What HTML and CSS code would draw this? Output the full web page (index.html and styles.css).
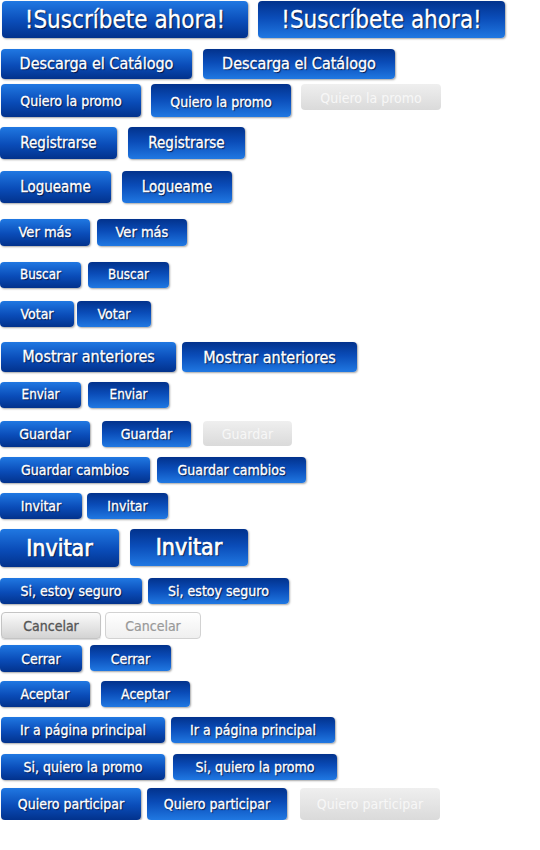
FILE: index.html
```html
<!DOCTYPE html>
<html lang="es">
<head>
<meta charset="UTF-8" />
<meta name="viewport" content="width=device-width, initial-scale=1" />
<title>Botones</title>
<link rel="stylesheet" href="styles.css">
</head>
<body>
  <div class="board">
    <div class="row r1 g10 pl2">
      <button class="btn up s-xl w246">!Suscríbete ahora!</button>
      <button class="btn down s-xl w247">!Suscríbete ahora!</button>
    </div>
    <div class="row r2 g11 pl1">
      <button class="btn up s-l w191">Descarga el Catálogo</button>
      <button class="btn down s-l w192">Descarga el Catálogo</button>
    </div>
    <div class="row r3 g10 pl1">
      <button class="btn up s-m h33 w140">Quiero la promo</button>
      <button class="btn down s-m h33 w140 lower">Quiero la promo</button>
      <button class="btn off s-m w140 lower">Quiero la promo</button>
    </div>
    <div class="row r4 g11">
      <button class="btn up s-ml h32 w117">Registrarse</button>
      <button class="btn down s-ml h32 w117">Registrarse</button>
    </div>
    <div class="row r5 g11">
      <button class="btn up s-ml h32 w111">Logueame</button>
      <button class="btn down s-ml h32 w110">Logueame</button>
    </div>
    <div class="row r6 g7">
      <button class="btn up s-sm h27 w90">Ver más</button>
      <button class="btn down s-sm h27 w90">Ver más</button>
    </div>
    <div class="row r7 g7">
      <button class="btn up s-xs w81">Buscar</button>
      <button class="btn down s-xs w81">Buscar</button>
    </div>
    <div class="row r8 g3">
      <button class="btn up s-s w74">Votar</button>
      <button class="btn down s-s w74">Votar</button>
    </div>
    <div class="row r9 g6 pl1">
      <button class="btn up s-l w175">Mostrar anteriores</button>
      <button class="btn down s-l w175 lower">Mostrar anteriores</button>
    </div>
    <div class="row r10 g7">
      <button class="btn up s-xs w81">Enviar</button>
      <button class="btn down s-xs w81">Enviar</button>
    </div>
    <div class="row r11 g12">
      <button class="btn up s-s w90">Guardar</button>
      <button class="btn down s-s w89">Guardar</button>
      <button class="btn off s-s w89 h25">Guardar</button>
    </div>
    <div class="row r12 g7">
      <button class="btn up s-s w150">Guardar cambios</button>
      <button class="btn down s-s w149">Guardar cambios</button>
    </div>
    <div class="row r13 g5">
      <button class="btn up s-s w82">Invitar</button>
      <button class="btn down s-s w81">Invitar</button>
    </div>
    <div class="row r14 g11">
      <button class="btn up s-xxl w119">Invitar</button>
      <button class="btn down s-xxl w118 h37">Invitar</button>
    </div>
    <div class="row r15 g6">
      <button class="btn up s-s w142">Si, estoy seguro</button>
      <button class="btn down s-s w141">Si, estoy seguro</button>
    </div>
    <div class="row r16 g4 pl1">
      <button class="btn cancel s-m h27 w100">Cancelar</button>
      <button class="btn cancel-off s-m h27 w96">Cancelar</button>
    </div>
    <div class="row r17 g8">
      <button class="btn up s-s h27 w82">Cerrar</button>
      <button class="btn down s-s w81 lower">Cerrar</button>
    </div>
    <div class="row r18 g11">
      <button class="btn up s-s w90">Aceptar</button>
      <button class="btn down s-s w89">Aceptar</button>
    </div>
    <div class="row r19 g6 pl1">
      <button class="btn up s-s w164">Ir a página principal</button>
      <button class="btn down s-s w164">Ir a página principal</button>
    </div>
    <div class="row r20 g8 pl1">
      <button class="btn up s-s w164">Si, quiero la promo</button>
      <button class="btn down s-s w164">Si, quiero la promo</button>
    </div>
    <div class="row r21 pl1">
      <button class="btn up s-s h32 w140">Quiero participar</button>
      <button class="btn down s-s h32 w140 ml6">Quiero participar</button>
      <button class="btn off s-s h32 w140 ml13">Quiero participar</button>
    </div>
  </div>
</body>
</html>
```

FILE: styles.css
```css
body {
  margin: 0;
  background: #fff;
  font-family: "DejaVu Sans Condensed", "DejaVu Sans", sans-serif;
}
.board {
  display: flex;
  flex-direction: column;
  padding-top: 1px;
}
.row {
  display: flex;
  align-items: flex-start;
}

/* row spacing */
.r2 { margin-top: 11px; }
.r3 { margin-top: 5px; }
.r4 { margin-top: 10px; }
.r5 { margin-top: 12px; }
.r6 { margin-top: 16px; }
.r7 { margin-top: 16px; }
.r8 { margin-top: 13px; }
.r9 { margin-top: 15px; }
.r10 { margin-top: 10px; }
.r11 { margin-top: 13px; }
.r12 { margin-top: 10px; }
.r13 { margin-top: 10px; }
.r14 { margin-top: 10px; }
.r15 { margin-top: 11px; }
.r16 { margin-top: 8px; }
.r17 { margin-top: 6px; }
.r18 { margin-top: 9px; }
.r19 { margin-top: 10px; }
.r20 { margin-top: 11px; }
.r21 { margin-top: 8px; }

.g3 { gap: 3px; }
.g4 { gap: 4px; }
.g5 { gap: 5px; }
.g6 { gap: 6px; }
.g7 { gap: 7px; }
.g8 { gap: 8px; }
.g10 { gap: 10px; }
.g11 { gap: 11px; }
.g12 { gap: 12px; }
.pl1 { padding-left: 1px; }
.pl2 { padding-left: 2px; }
.ml6 { margin-left: 6px; }
.ml13 { margin-left: 13px; }

/* base button */
.btn {
  font-family: inherit;
  height: 26px;
  padding: 0;
  border: none;
  border-radius: 4px;
  color: #fff;
  text-align: center;
  line-height: 1;
  cursor: pointer;
  -webkit-text-stroke: 0.3px #fff;
  text-shadow: 1px 1px 1px rgba(0, 0, 30, 0.8);
  box-shadow: 1px 1px 2px rgba(0, 0, 0, 0.35);
}
.up {
  background: linear-gradient(#2078e2, #0a4cb8 55%, #02328c);
}
.down {
  background: linear-gradient(#02328c, #0a4cb8 45%, #2078e2);
}
.lower {
  padding-top: 2px;
}
.off {
  background: linear-gradient(#efefef, #dadada);
  color: #f7f7f7;
  -webkit-text-stroke: 0;
  text-shadow: none;
  box-shadow: none;
}
.cancel {
  background: linear-gradient(#fbfbfb, #d3d3d3);
  border: 1px solid #c4c4c4;
  color: #555;
  -webkit-text-stroke: 0.3px #555;
  text-shadow: none;
  box-shadow: 0 1px 1px rgba(0, 0, 0, 0.15);
}
.cancel-off {
  background: linear-gradient(#fff, #efefef);
  border: 1px solid #d2d2d2;
  color: #999;
  -webkit-text-stroke: 0.2px #999;
  text-shadow: none;
  box-shadow: none;
}

/* text sizes */
.s-xxl { font-size: 23px; height: 38px; -webkit-text-stroke: 0.7px #fff; }
.s-xl { font-size: 24px; height: 37px; }
.s-l { font-size: 16px; height: 30px; }
.s-ml { font-size: 15px; }
.s-sm { font-size: 14.5px; }
.s-m { font-size: 14px; }
.s-s { font-size: 14px; }
.s-xs { font-size: 13.3px; }

.h25 { height: 25px; }
.h27 { height: 27px; }
.h32 { height: 32px; }
.h33 { height: 33px; }
.h37 { height: 37px; }

.w74 { width: 74px; }
.w81 { width: 81px; }
.w82 { width: 82px; }
.w89 { width: 89px; }
.w90 { width: 90px; }
.w96 { width: 96px; }
.w100 { width: 100px; }
.w110 { width: 110px; }
.w111 { width: 111px; }
.w117 { width: 117px; }
.w118 { width: 118px; }
.w119 { width: 119px; }
.w140 { width: 140px; }
.w141 { width: 141px; }
.w142 { width: 142px; }
.w149 { width: 149px; }
.w150 { width: 150px; }
.w164 { width: 164px; }
.w175 { width: 175px; }
.w191 { width: 191px; }
.w192 { width: 192px; }
.w246 { width: 246px; }
.w247 { width: 247px; }
```
